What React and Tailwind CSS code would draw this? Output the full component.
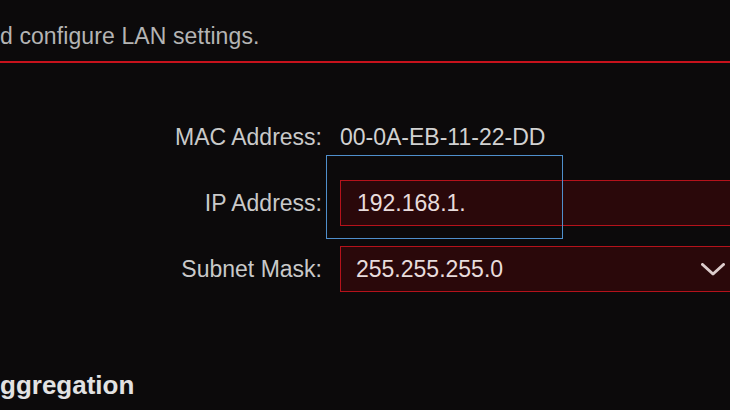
export default function App() {
  return (
    <div
      className="relative w-[730px] h-[410px] overflow-hidden bg-[#0c0a0b]"
      style={{ fontFamily: '"Liberation Sans", Arial, sans-serif' }}
    >
      <div className="pt-[22px] h-[61px] text-[23px] leading-[28px] text-[#b4b4b4] whitespace-nowrap tracking-[0.1px]">
        <span>d configure LAN settings.</span>
      </div>
      <div className="h-[2px] w-full bg-[#c8121c]" />

      <div className="mt-[51px] flex flex-col gap-[20px]">
        <div className="flex items-center h-[46px]">
          <div className="w-[322px] shrink-0 text-right text-[23px] text-[#c9c9c9] whitespace-nowrap">MAC Address:</div>
          <div className="ml-[18px] text-[23px] text-[#d2d2d2] whitespace-nowrap">00-0A-EB-11-22-DD</div>
        </div>
        <div className="flex items-center h-[46px]">
          <div className="w-[322px] shrink-0 text-right text-[23px] text-[#c9c9c9] whitespace-nowrap">IP Address:</div>
          <div className="ml-[18px] w-[400px] h-[46px] shrink-0 border border-[#b5121b] bg-[#2a080a] flex items-center pl-[16px] text-[23px] text-[#e8dcdc] whitespace-nowrap">
            192.168.1.
          </div>
        </div>
        <div className="flex items-center h-[46px]">
          <div className="w-[322px] shrink-0 text-right text-[23px] text-[#c9c9c9] whitespace-nowrap">Subnet Mask:</div>
          <div className="ml-[18px] w-[400px] h-[46px] shrink-0 border border-[#b5121b] bg-[#2a080a] flex items-center pl-[15px] text-[23px] text-[#e8dcdc] whitespace-nowrap">
            <span>255.255.255.0</span>
            <svg width="24" height="13" viewBox="0 0 24 13" className="shrink-0 ml-auto mr-[14px]">
              <polyline points="1.5,1.5 12,11 22.5,1.5" fill="none" stroke="#dccccc" strokeWidth="3" strokeLinecap="round" strokeLinejoin="round" />
            </svg>
          </div>
        </div>
      </div>

      <div className="mt-[78px] h-[30px] flex items-center text-[26px] font-bold text-[#e2e2e2] whitespace-nowrap">
        ggregation
      </div>

      <div className="absolute left-[326px] top-[155px] w-[237px] h-[84px] border-[1.5px] border-[#4f8fcc]" />
    </div>
  );
}
